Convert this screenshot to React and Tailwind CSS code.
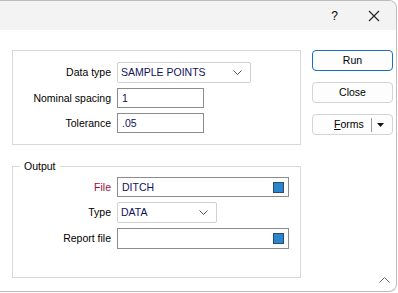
import React from 'react';

const font = { fontFamily: '"Liberation Sans", Arial, sans-serif' };

function Chevron( { className = '' } ) {
	return (
		<svg width="9" height="6" viewBox="0 0 9 6" className={ className }>
			<path d="M0.5 0.5 L4.5 4.5 L8.5 0.5" fill="none" stroke="#555" strokeWidth="1" />
		</svg>
	);
}

function Label( { children, color = 'text-[#000]' } ) {
	return (
		<div className={ `w-[104px] shrink-0 pr-[6px] text-right ${ color }` }>
			{ children }
		</div>
	);
}

function TextBox( { value, width, picker = false, h = 'h-[20px]' } ) {
	return (
		<div
			className={ `flex ${ h } items-center justify-between border border-[#8c8c8c] bg-white pl-[4px] pr-[4px] text-[#12125c]` }
			style={ { width } }
		>
			<span>{ value }</span>
			{ picker && (
				<span className="h-[11px] w-[11px] border border-[#2c4a6a] bg-[#2a86cf]" />
			) }
		</div>
	);
}

function Combo( { value, width } ) {
	return (
		<div
			className="flex h-[21px] items-center justify-between rounded-[2px] border border-[#d0d0d0] bg-white pl-[3px] pr-[8px] text-[#12125c]"
			style={ { width } }
		>
			<span>{ value }</span>
			<Chevron />
		</div>
	);
}

function Row( { children, className = '' } ) {
	return <div className={ `flex items-center ${ className }` }>{ children }</div>;
}

function Button( { children, primary = false } ) {
	return (
		<div
			className={ `flex h-[21px] w-[81px] items-center justify-center rounded-[4px] border bg-[#fdfdfd] text-[#000] ${
				primary ? 'border-[#1a6fc4]' : 'border-[#d4d4d4]'
			}` }
		>
			{ children }
		</div>
	);
}

export default function App() {
	return (
		<div className="h-[293px] w-[398px] bg-white text-[10.5px] leading-none" style={ font }>
			<div className="relative flex h-[292px] w-[397px] flex-col overflow-hidden rounded-r-[8px] border-t border-r border-b border-[#bdbdbd]">
				<div className="flex h-[29px] shrink-0 items-center justify-end bg-[#f3f3f3] text-[#000]">
					<span className="mr-[30px] text-[12px]">?</span>
					<svg width="12" height="12" viewBox="0 0 12 12" className="mr-[16px]">
						<path d="M1 1 L11 11 M11 1 L1 11" stroke="#222" strokeWidth="1.1" />
					</svg>
				</div>

				<div className="flex pt-[20px] pl-[12px]">
					<div className="flex w-[289px] flex-col">
						<div className="flex h-[95px] flex-col gap-[5px] border border-[#d9d9d9] pt-[11px]">
							<Row>
								<Label>Data type</Label>
								<Combo value="SAMPLE POINTS" width={ 134 } />
							</Row>
							<Row>
								<Label>Nominal spacing</Label>
								<TextBox value="1" width={ 87 } />
							</Row>
							<Row>
								<Label>Tolerance</Label>
								<TextBox value=".05" width={ 87 } />
							</Row>
						</div>

						<div className="relative mt-[21px] flex h-[112px] flex-col gap-[5px] border border-[#d9d9d9] pt-[10px]">
							<span className="absolute -top-[6px] left-[7px] bg-white px-[4px] text-[#000]">
								Output
							</span>
							<Row>
								<Label color="text-[#a0103c]">File</Label>
								<TextBox value="DITCH" width={ 172 } picker />
							</Row>
							<Row>
								<Label>Type</Label>
								<Combo value="DATA" width={ 100 } />
							</Row>
							<Row>
								<Label>Report file</Label>
								<TextBox value="" width={ 172 } picker h="h-[21px]" />
							</Row>
						</div>
					</div>

					<div className="ml-[11px] flex flex-col gap-[11px]">
						<Button primary>Run</Button>
						<Button>Close</Button>
						<div className="flex h-[21px] w-[81px] items-center rounded-[4px] border border-[#d4d4d4] bg-[#fdfdfd] text-[#000]">
							<span className="ml-[16px] w-[40px] text-center">
								<span className="underline">F</span>orms
							</span>
							<span className="ml-[2px] h-[14px] w-px bg-[#9a9a9a]" />
							<svg width="7" height="4" viewBox="0 0 7 4" className="ml-[5px]">
								<path d="M0 0 L7 0 L3.5 4 Z" fill="#111" />
							</svg>
						</div>
					</div>
				</div>

				<svg width="11" height="6" viewBox="0 0 11 6" className="absolute right-[6px] bottom-[8px]">
					<path d="M0.5 5.5 L5.5 0.5 L10.5 5.5" fill="none" stroke="#666" strokeWidth="1" />
				</svg>
			</div>
		</div>
	);
}
